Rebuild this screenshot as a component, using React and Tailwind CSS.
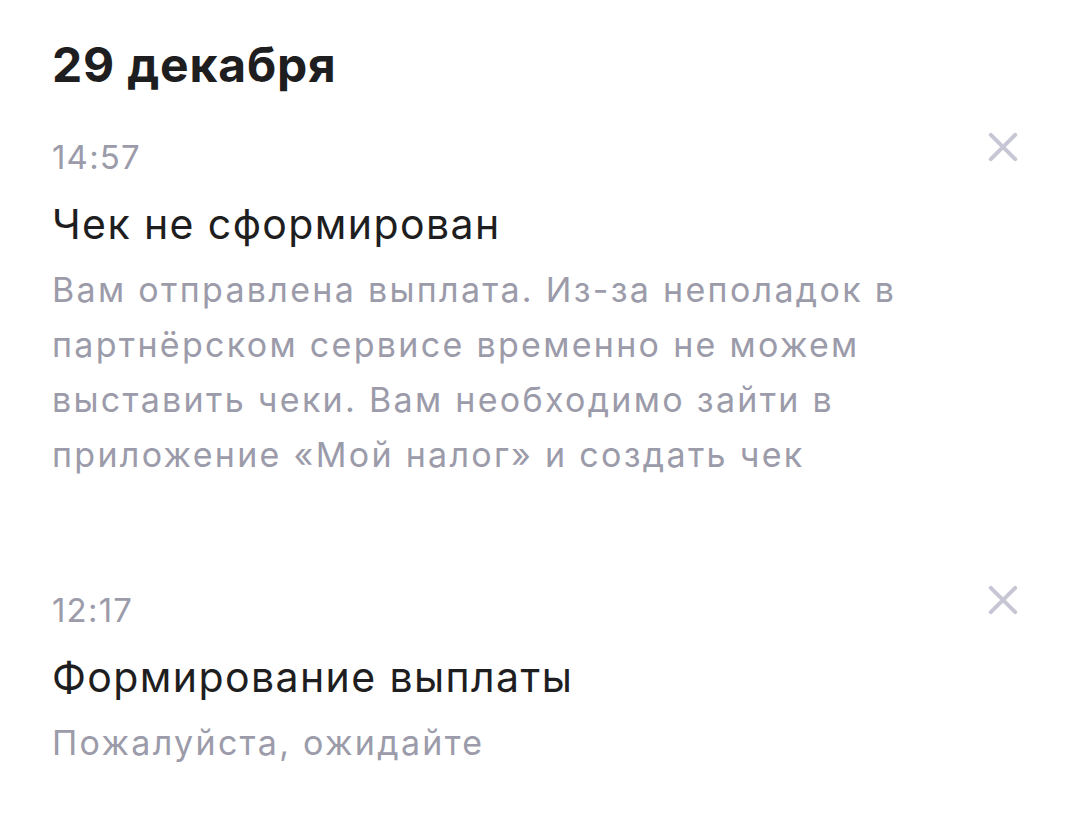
const notifications = [
  {
    time: '14:57',
    title: 'Чек не сформирован',
    text: 'Вам отправлена выплата. Из-за неполадок в партнёрском сервисе временно не можем выставить чеки. Вам необходимо зайти в приложение «Мой налог» и создать чек',
  },
  {
    time: '12:17',
    title: 'Формирование выплаты',
    text: 'Пожалуйста, ожидайте',
  },
]

function CloseIcon() {
  return (
    <svg width="30" height="30" viewBox="0 0 30 30" fill="none">
      <path d="M2.8 2.8 27.2 27.2M27.2 2.8 2.8 27.2" stroke="currentColor" strokeWidth="4" strokeLinecap="round" />
    </svg>
  )
}

export default function App() {
  return (
    <div className="min-h-screen bg-white pl-[52px] pr-[62px] pt-[37px] font-['Inter',sans-serif]">
      {/* Date header */}
      <h2 className="text-[48px] font-bold leading-[56px] tracking-[0.8px] text-[#1e1e21]">29 декабря</h2>

      <div className="mt-[44px] flex flex-col gap-[108px]">
        {notifications.map((n) => (
          <div key={n.time} className="flex items-start justify-between">
            <div className="max-w-[880px]">
              <div className="text-[33px] leading-[40px] tracking-[1.2px] text-[#9b9baa]">{n.time}</div>
              <div className="mt-[23px] text-[41px] leading-[48px] tracking-[1.4px] text-[#1e1e21]">{n.title}</div>
              <p className="mt-[14px] text-[34px] leading-[55px] tracking-[2.3px] text-[#9b9baa]">{n.text}</p>
            </div>
            <button className="mt-[-5px] text-[#c6c6d4]">
              <CloseIcon />
            </button>
          </div>
        ))}
      </div>
    </div>
  )
}
